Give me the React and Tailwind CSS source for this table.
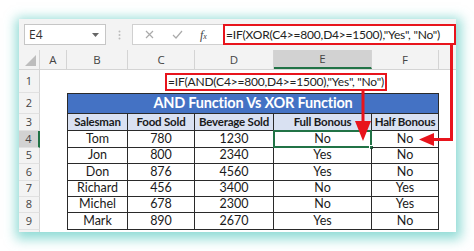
import React from "react";

const COLS = [61, 67, 79, 98, 67];

const data = [
  ["Tom", "780", "1230", "No", "No"],
  ["Jon", "800", "2340", "Yes", "No"],
  ["Don", "876", "4560", "Yes", "No"],
  ["Richard", "456", "3400", "No", "Yes"],
  ["Michel", "678", "2300", "No", "Yes"],
  ["Mark", "890", "2670", "Yes", "No"],
];

function RowHead({ n, h, active }) {
  return (
    <div
      className={
        "w-[21px] shrink-0 flex items-center justify-center text-[11px] text-[#444] border-b border-[#e1e1e1] font-['Open_Sans',sans-serif] " +
        (active ? "bg-[#d2d2d2] border-r-2 border-r-[#217346]" : "bg-[#f3f3f3] border-r border-r-[#d4d4d4]")
      }
      style={{ height: h }}
    >
      {n <= 9 ? n : ""}
    </div>
  );
}

export default function App() {
  const rowH = [23, 21, 17, 17, 16, 17, 16, 16, 17, 10];
  return (
    <div className="w-[474px] h-[251px] bg-white overflow-hidden pt-[19px] pl-[19px] font-['Open_Sans',sans-serif]">
      <div className="relative w-[437px] h-[213px] bg-[#f3f3f3] overflow-hidden shadow-[1px_3px_11px_4px_rgba(70,195,185,0.6)]">
        {/* toolbar */}
        <div className="h-[31px] flex items-start pt-[5px] pl-[5px]">
          <div className="w-[82px] h-[21px] bg-white border border-[#c6c6c6] flex items-center justify-between pl-[4px] pr-[6px]">
            <span className="text-[12px] text-[#333] leading-none">E4</span>
            <svg width="7" height="4" viewBox="0 0 7 4"><path d="M0 0h7L3.5 4z" fill="#666" /></svg>
          </div>
          <div className="w-[26px] h-[21px] flex items-center justify-center">
            <svg width="3" height="10" viewBox="0 0 3 10"><circle cx="1.5" cy="1.5" r="1" fill="#bbb" /><circle cx="1.5" cy="5" r="1" fill="#bbb" /><circle cx="1.5" cy="8.5" r="1" fill="#bbb" /></svg>
          </div>
          <div className="w-[91px] h-[21px] bg-white border border-[#d0d0d0] border-r-0 flex items-center">
            <svg className="ml-[12px]" width="9" height="9" viewBox="0 0 9 9"><path d="M1 1l7 7M8 1l-7 7" stroke="#aaa" strokeWidth="1.2" /></svg>
            <svg className="ml-[18px]" width="11" height="9" viewBox="0 0 11 9"><path d="M1 5l3 3 6-7" stroke="#aaa" strokeWidth="1.2" fill="none" /></svg>
            <span className="ml-[17px] text-[12px] italic text-[#444] font-['Liberation_Serif',serif] leading-none">
              f<span className="text-[8px]">x</span>
            </span>
          </div>
          <div className="w-[233px] h-[21px] bg-white border-[2.5px] border-[#e8141c] flex items-center pl-[1px]">
            <span className="text-[12px] text-[#222] whitespace-nowrap leading-none tracking-[-0.2px] font-['Lato',sans-serif]">
              =IF(XOR(C4&gt;=800,D4&gt;=1500),"Yes", "No")
            </span>
          </div>
        </div>

        {/* column headers */}
        <div className="flex h-[20px] bg-[#f3f3f3] border-b border-[#d4d4d4] text-[11.5px] text-[#444]">
          <div className="w-[21px] shrink-0 relative border-r border-[#d4d4d4]">
            <svg className="absolute right-[3px] bottom-[3px]" width="11" height="11" viewBox="0 0 11 11"><path d="M11 0V11H0z" fill="#bdbdbd" /></svg>
          </div>
          <div className="w-[27px] shrink-0 flex items-center justify-center border-r border-[#d4d4d4]">A</div>
          {["B", "C", "D", "E", "F"].map((c, i) => (
            <div
              key={c}
              className={
                "shrink-0 flex items-center justify-center border-r border-[#d4d4d4] " +
                (c === "E" ? "bg-[#d2d2d2] border-b-2 border-b-[#217346]" : "")
              }
              style={{ width: COLS[i] }}
            >
              {c}
            </div>
          ))}
          <div className="flex-1" />
        </div>

        {/* grid rows */}
        <div className="bg-white font-['Lato',sans-serif]">
          {rowH.map((h, ri) => {
            const n = ri + 1;
            return (
              <div key={n} className="flex" style={{ height: h }}>
                <RowHead n={n} h={h} active={n === 4} />
                <div className="w-[27px] shrink-0" />
                {n === 2 && (
                  <div className="w-[372px] shrink-0 bg-[#4472c4] border border-[#2a2a2a] flex items-center justify-center text-white font-bold text-[14.5px] tracking-[-0.2px] leading-none">
                    AND Function Vs XOR Function
                  </div>
                )}
                {n === 3 &&
                  ["Salesman", "Food Sold", "Beverage Sold", "Full Bonous", "Half Bonous"].map((t, i) => (
                    <div
                      key={t}
                      className={
                        "shrink-0 bg-[#d9e1f2] border-r border-b border-[#2a2a2a] flex items-center justify-center font-bold text-[11.5px] tracking-[-0.2px] text-[#1a1a1a] leading-none whitespace-nowrap " +
                        (i === 0 ? "border-l" : "")
                      }
                      style={{ width: COLS[i] }}
                    >
                      {t}
                    </div>
                  ))}
                {n >= 4 && n <= 9 &&
                  data[n - 4].map((t, i) => (
                    <div
                      key={i}
                      className={
                        "relative shrink-0 border-r border-b border-[#2a2a2a] flex items-center justify-center text-[12.5px] text-[#1a1a1a] leading-none " +
                        (i === 0 ? "border-l" : "")
                      }
                      style={{ width: COLS[i] }}
                    >
                      {t}
                      {n === 4 && i === 3 && (
                        <>
                          <div className="absolute left-[-1px] top-[-1px] right-[-1px] bottom-[-1px] border-2 border-[#217346]" />
                          <div className="absolute right-[-3px] bottom-[-3px] w-[5px] h-[5px] bg-[#217346] border border-white" />
                        </>
                      )}
                    </div>
                  ))}
              </div>
            );
          })}
        </div>

        {/* AND formula annotation */}
        <div className="absolute left-[146px] top-[54px] w-[222px] h-[18px] bg-white border-[2.5px] border-[#e8141c] flex items-center pl-[1px]">
          <span className="text-[12px] text-[#222] whitespace-nowrap leading-none tracking-[-0.2px] font-['Lato',sans-serif]">
            =IF(AND(C4&gt;=800,D4&gt;=1500),"Yes", "No")
          </span>
        </div>

        {/* arrows */}
        <svg className="absolute inset-0 pointer-events-none" width="437" height="213" viewBox="0 0 437 213">
          <path d="M344 71V104" stroke="#e8141c" strokeWidth="3" />
          <path d="M336 102H352L344 122Z" fill="#e8141c" />
          <path d="M432.5 26V120.5H412" stroke="#e8141c" strokeWidth="3" fill="none" />
          <path d="M400 120.5L415 114V127Z" fill="#e8141c" />
        </svg>
      </div>
    </div>
  );
}
